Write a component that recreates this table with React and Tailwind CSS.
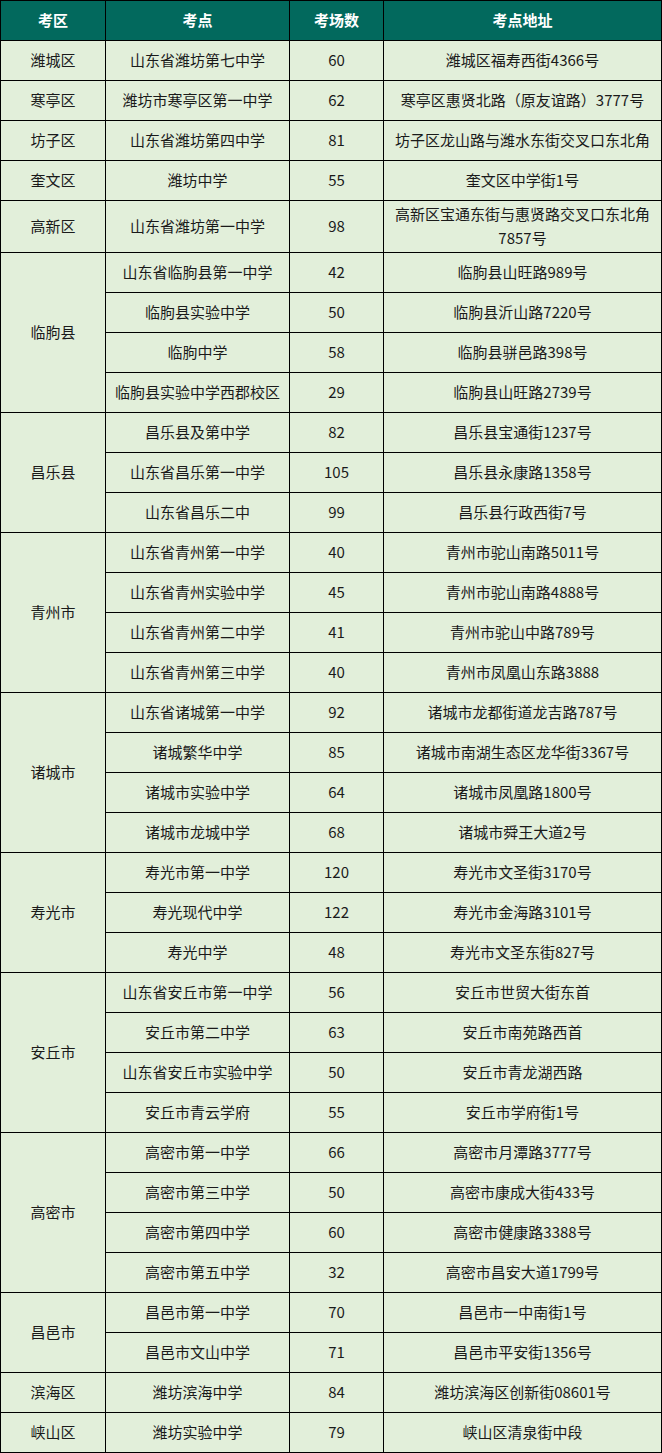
import React from "react";

const groups = [
  ["潍城区", [["山东省潍坊第七中学", "60", "潍城区福寿西街4366号"]]],
  ["寒亭区", [["潍坊市寒亭区第一中学", "62", "寒亭区惠贤北路（原友谊路）3777号"]]],
  ["坊子区", [["山东省潍坊第四中学", "81", "坊子区龙山路与潍水东街交叉口东北角"]]],
  ["奎文区", [["潍坊中学", "55", "奎文区中学街1号"]]],
  ["高新区", [["山东省潍坊第一中学", "98", "高新区宝通东街与惠贤路交叉口东北角7857号"]]],
  ["临朐县", [
    ["山东省临朐县第一中学", "42", "临朐县山旺路989号"],
    ["临朐县实验中学", "50", "临朐县沂山路7220号"],
    ["临朐中学", "58", "临朐县骈邑路398号"],
    ["临朐县实验中学西郡校区", "29", "临朐县山旺路2739号"],
  ]],
  ["昌乐县", [
    ["昌乐县及第中学", "82", "昌乐县宝通街1237号"],
    ["山东省昌乐第一中学", "105", "昌乐县永康路1358号"],
    ["山东省昌乐二中", "99", "昌乐县行政西街7号"],
  ]],
  ["青州市", [
    ["山东省青州第一中学", "40", "青州市驼山南路5011号"],
    ["山东省青州实验中学", "45", "青州市驼山南路4888号"],
    ["山东省青州第二中学", "41", "青州市驼山中路789号"],
    ["山东省青州第三中学", "40", "青州市凤凰山东路3888"],
  ]],
  ["诸城市", [
    ["山东省诸城第一中学", "92", "诸城市龙都街道龙吉路787号"],
    ["诸城繁华中学", "85", "诸城市南湖生态区龙华街3367号"],
    ["诸城市实验中学", "64", "诸城市凤凰路1800号"],
    ["诸城市龙城中学", "68", "诸城市舜王大道2号"],
  ]],
  ["寿光市", [
    ["寿光市第一中学", "120", "寿光市文圣街3170号"],
    ["寿光现代中学", "122", "寿光市金海路3101号"],
    ["寿光中学", "48", "寿光市文圣东街827号"],
  ]],
  ["安丘市", [
    ["山东省安丘市第一中学", "56", "安丘市世贸大街东首"],
    ["安丘市第二中学", "63", "安丘市南苑路西首"],
    ["山东省安丘市实验中学", "50", "安丘市青龙湖西路"],
    ["安丘市青云学府", "55", "安丘市学府街1号"],
  ]],
  ["高密市", [
    ["高密市第一中学", "66", "高密市月潭路3777号"],
    ["高密市第三中学", "50", "高密市康成大街433号"],
    ["高密市第四中学", "60", "高密市健康路3388号"],
    ["高密市第五中学", "32", "高密市昌安大道1799号"],
  ]],
  ["昌邑市", [
    ["昌邑市第一中学", "70", "昌邑市一中南街1号"],
    ["昌邑市文山中学", "71", "昌邑市平安街1356号"],
  ]],
  ["滨海区", [["潍坊滨海中学", "84", "潍坊滨海区创新街08601号"]]],
  ["峡山区", [["潍坊实验中学", "79", "峡山区清泉街中段"]]],
];

const cell = "border border-black text-center align-middle p-0 pb-[2px]";

export default function App() {
  return (
    <div
      className="w-[662px] bg-[#e2efda] text-[15px] leading-[20px] text-[#1a1a1a]"
      style={{ fontFamily: '"Microsoft YaHei", "Noto Sans CJK SC", "Noto Sans", sans-serif' }}
    >
      <table className="w-[662px] border-collapse table-fixed">
        <colgroup>
          <col className="w-[105px]" />
          <col className="w-[184px]" />
          <col className="w-[94px]" />
          <col />
        </colgroup>
        <thead>
          <tr className="h-[40px] bg-[#02695d] text-white font-bold">
            <th className={cell}>考区</th>
            <th className={cell}>考点</th>
            <th className={cell}>考场数</th>
            <th className={cell}>考点地址</th>
          </tr>
        </thead>
        <tbody>
          {groups.map(([area, rows]) =>
            rows.map((r, i) => {
              const tall = r[2].length > 18;
              return (
                <tr key={area + i} className={tall ? "h-[52px]" : "h-[40px]"}>
                  {i === 0 && (
                    <td className={cell} rowSpan={rows.length}>
                      {area}
                    </td>
                  )}
                  <td className={cell}>{r[0]}</td>
                  <td className={cell}>{r[1]}</td>
                  <td className={cell + (tall ? " px-[8px] leading-[24px]" : "")}>{r[2]}</td>
                </tr>
              );
            })
          )}
        </tbody>
      </table>
    </div>
  );
}
